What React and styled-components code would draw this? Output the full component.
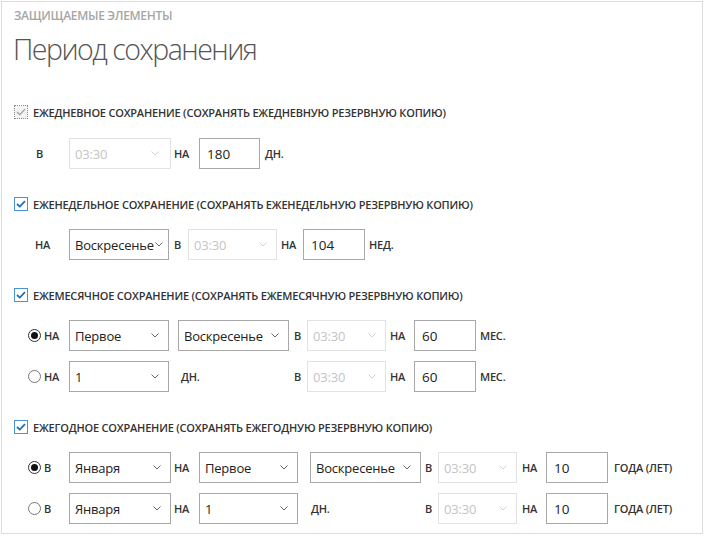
import React from "react";
import styled, { createGlobalStyle } from "styled-components";

const GlobalStyle = createGlobalStyle`
  html, body { margin: 0; padding: 0; background: #fff; }
  body { font-family: "Open Sans", "Noto Sans", sans-serif; color: #333; }
`;

const Frame = styled.div`
  box-sizing: border-box;
  margin: 1px 0 0 1px;
  width: 702px;
  height: 533px;
  border: 1px solid #dcdcdc;
  padding: 6px 11px 0 11px;
  display: flex;
  flex-direction: column;
`;

const Kicker = styled.div`
  font-size: 12px;
  line-height: 16px;
  font-weight: 600;
  letter-spacing: -0.3px;
  color: #a6a6a6;
  text-transform: uppercase;
  margin-left: 1px;
`;

const Title = styled.h1`
  margin: 5px 0 0 0;
  font-size: 28.5px;
  line-height: 40px;
  font-weight: 300;
  letter-spacing: -1.5px;
  color: #555;
`;

const Sections = styled.div`
  margin-top: 33px;
  display: flex;
  flex-direction: column;
  gap: 25px;
`;

const Section = styled.section`
  display: flex;
  flex-direction: column;
  gap: 10px;
`;

const CheckLine = styled.div`
  display: flex;
  align-items: center;
  gap: 5px;
  height: 20px;
  margin-bottom: ${(p) => p.$after}px;
  padding-left: 1px;
`;

const Box = styled.span`
  box-sizing: border-box;
  width: 14px;
  height: 14px;
  display: flex;
  align-items: center;
  justify-content: center;
  border: 1px ${(p) => (p.$focus ? "dotted #8a8a8a" : "solid #4a92d4")};
  background: ${(p) => (p.$focus ? "#f4f4f4" : "#fff")};
`;

const CheckText = styled.span`
  font-size: 11px;
  font-weight: 600;
  letter-spacing: -0.2px;
  text-transform: uppercase;
  color: #333;
`;

const Row = styled.div`
  display: grid;
  grid-template-columns: ${(p) => p.$cols};
  align-items: center;
  height: 31px;
  padding-left: ${(p) => p.$indent}px;
`;

const Label = styled.span`
  font-size: 11px;
  font-weight: 600;
  letter-spacing: -0.2px;
  text-transform: uppercase;
  color: #333;
  padding-left: ${(p) => p.$pad || 0}px;
  white-space: nowrap;
`;

const SelectBox = styled.div`
  box-sizing: border-box;
  width: ${(p) => p.$w}px;
  height: 31px;
  display: flex;
  align-items: center;
  justify-content: space-between;
  gap: 1px;
  border: 1px solid ${(p) => (p.$disabled ? "#e2e2e2" : "#a8a8a8")};
  padding: 0 ${(p) => p.$pr}px 0 4px;
  font-size: 13px;
  letter-spacing: -0.2px;
  color: ${(p) => (p.$disabled ? "#c4c4c4" : "#222")};
  background: #fff;
  white-space: nowrap;
  overflow: hidden;
`;

const SelectText = styled.span`
  overflow: hidden;
  padding-left: 1px;
`;

const Field = styled.input`
  box-sizing: border-box;
  width: ${(p) => p.$w}px;
  height: 31px;
  border: 1px solid #a8a8a8;
  padding: 0 0 0 7px;
  font-family: inherit;
  font-size: 13.5px;
  color: #222;
  outline: none;
  background: #fff;
`;

const RadioCell = styled.div`
  display: flex;
  align-items: center;
  gap: 3px;
`;

const RadioCircle = styled.span`
  box-sizing: border-box;
  width: 13px;
  height: 13px;
  border-radius: 50%;
  border: 1px solid ${(p) => (p.$on ? "#333" : "#777")};
  display: flex;
  align-items: center;
  justify-content: center;
  &::after {
    content: "";
    width: 7px;
    height: 7px;
    border-radius: 50%;
    background: ${(p) => (p.$on ? "#111" : "transparent")};
  }
`;

const Chevron = ({ disabled }) => (
  <svg width="8" height="5" viewBox="0 0 8 5" style={{ flexShrink: 0 }}>
    <path d="M0.5 0.5 L4 4 L7.5 0.5" fill="none" stroke={disabled ? "#d2d2d2" : "#666"} strokeWidth="1" />
  </svg>
);

const Select = ({ w, value, disabled, pr = 9 }) => (
  <SelectBox $w={w} $disabled={disabled} $pr={pr}>
    <SelectText>{value}</SelectText>
    <Chevron disabled={disabled} />
  </SelectBox>
);

const Check = ({ focus }) => (
  <Box $focus={focus}>
    <svg width="10" height="8" viewBox="0 0 10 8">
      <path d="M1 4 L3.8 6.6 L9 1.2" fill="none" stroke={focus ? "#9a9a9a" : "#1f6fb5"} strokeWidth={focus ? 1.2 : 1.8} />
    </svg>
  </Box>
);

const Radio = ({ on, label }) => (
  <RadioCell>
    <RadioCircle $on={on} />
    <Label>{label}</Label>
  </RadioCell>
);

const COLS_1 = "34px 105px 25px 66px auto";
const COLS_2 = "34px 105px 14px 93px 22px 66px auto";
const COLS_3 = "41px 109px 116px 13px 83px 24px 66px auto";
const COLS_4 = "41px 105px 25px 111px 115px 13px 84px 24px 68px auto";

export default function App() {
  return (
    <>
      <GlobalStyle />
      <Frame>
        <Kicker>Защищаемые элементы</Kicker>
        <Title>Период сохранения</Title>
        <Sections>
          <Section>
            <CheckLine $after={6}>
              <Check focus />
              <CheckText>Ежедневное сохранение (сохранять ежедневную резервную копию)</CheckText>
            </CheckLine>
            <Row $cols={COLS_1} $indent={22}>
              <Label $pad={1}>В</Label>
              <Select w={102} value="03:30" disabled pr={11} />
              <Label>НА</Label>
              <Field $w={61} defaultValue="180" />
              <Label>ДН.</Label>
            </Row>
          </Section>

          <Section>
            <CheckLine $after={5}>
              <Check />
              <CheckText>Еженедельное сохранение (сохранять еженедельную резервную копию)</CheckText>
            </CheckLine>
            <Row $cols={COLS_2} $indent={22}>
              <Label>НА</Label>
              <Select w={100} value="Воскресенье" pr={5} />
              <Label>В</Label>
              <Select w={89} value="03:30" disabled />
              <Label>НА</Label>
              <Field $w={62} defaultValue="104" />
              <Label>НЕД.</Label>
            </Row>
          </Section>

          <Section>
            <CheckLine $after={5}>
              <Check />
              <CheckText>Ежемесячное сохранение (сохранять ежемесячную резервную копию)</CheckText>
            </CheckLine>
            <Row $cols={COLS_3} $indent={15}>
              <Radio on label="НА" />
              <Select w={100} value="Первое" />
              <Select w={111} value="Воскресенье" />
              <Label>В</Label>
              <Select w={79} value="03:30" disabled />
              <Label>НА</Label>
              <Field $w={62} defaultValue="60" />
              <Label>МЕС.</Label>
            </Row>
            <Row $cols={COLS_3} $indent={15}>
              <Radio label="НА" />
              <Select w={100} value="1" />
              <Label $pad={3}>ДН.</Label>
              <Label>В</Label>
              <Select w={79} value="03:30" disabled />
              <Label>НА</Label>
              <Field $w={62} defaultValue="60" />
              <Label>МЕС.</Label>
            </Row>
          </Section>

          <Section>
            <CheckLine $after={5}>
              <Check />
              <CheckText>Ежегодное сохранение (сохранять ежегодную резервную копию)</CheckText>
            </CheckLine>
            <Row $cols={COLS_4} $indent={15}>
              <Radio on label="В" />
              <Select w={102} value="Января" />
              <Label>НА</Label>
              <Select w={99} value="Первое" />
              <Select w={111} value="Воскресенье" />
              <Label>В</Label>
              <Select w={79} value="03:30" disabled />
              <Label>НА</Label>
              <Field $w={62} defaultValue="10" />
              <Label>ГОДА (ЛЕТ)</Label>
            </Row>
            <Row $cols={COLS_4} $indent={15}>
              <Radio label="В" />
              <Select w={102} value="Января" />
              <Label>НА</Label>
              <Select w={99} value="1" />
              <Label $pad={1}>ДН.</Label>
              <Label>В</Label>
              <Select w={79} value="03:30" disabled />
              <Label>НА</Label>
              <Field $w={62} defaultValue="10" />
              <Label>ГОДА (ЛЕТ)</Label>
            </Row>
          </Section>
        </Sections>
      </Frame>
    </>
  );
}
